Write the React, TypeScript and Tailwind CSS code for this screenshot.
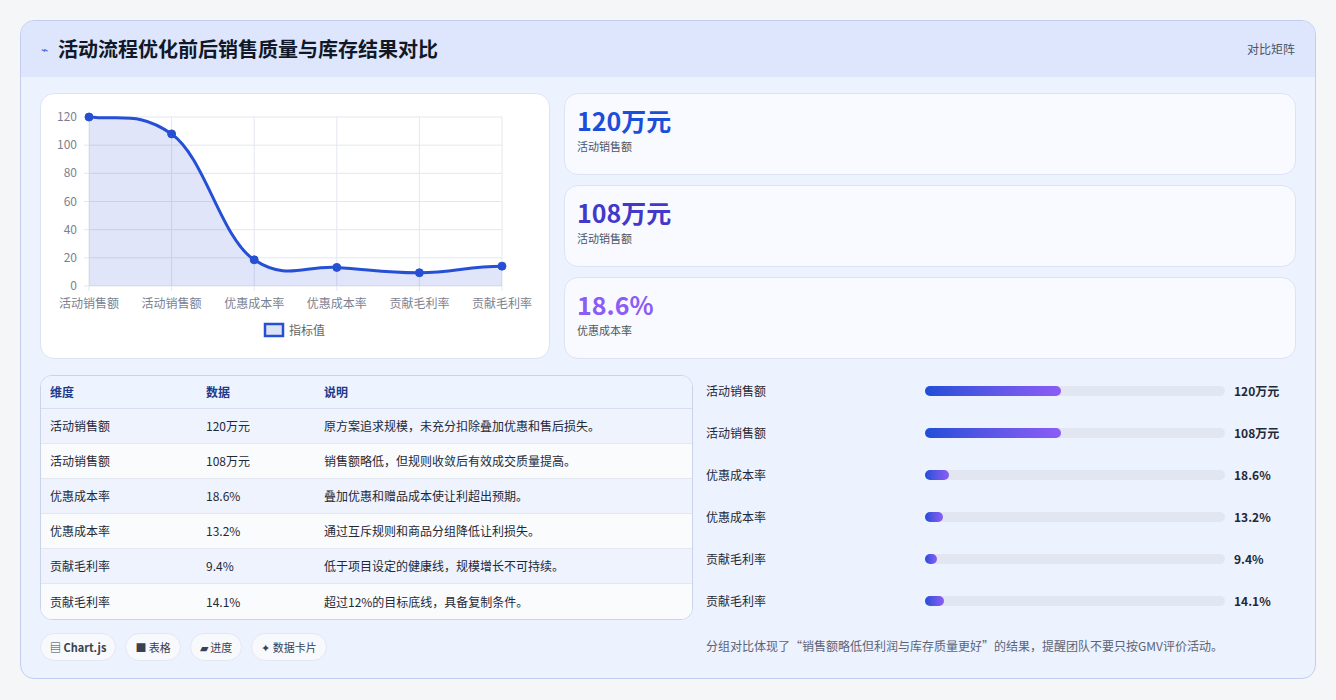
import React from "react";

const rows = [
  ["活动销售额", "120万元", "原方案追求规模，未充分扣除叠加优惠和售后损失。"],
  ["活动销售额", "108万元", "销售额略低，但规则收敛后有效成交质量提高。"],
  ["优惠成本率", "18.6%", "叠加优惠和赠品成本使让利超出预期。"],
  ["优惠成本率", "13.2%", "通过互斥规则和商品分组降低让利损失。"],
  ["贡献毛利率", "9.4%", "低于项目设定的健康线，规模增长不可持续。"],
  ["贡献毛利率", "14.1%", "超过12%的目标底线，具备复制条件。"],
];
const bars = [
  ["活动销售额", "120万元", 136],
  ["活动销售额", "108万元", 136],
  ["优惠成本率", "18.6%", 24],
  ["优惠成本率", "13.2%", 18],
  ["贡献毛利率", "9.4%", 12],
  ["贡献毛利率", "14.1%", 19],
] as const;

function Chart() {
  const vals = [120, 108, 18.6, 13.2, 9.4, 14.1];
  const x0 = 48, x1 = 461, y0 = 23, y1 = 192;
  const xs = vals.map((_, i) => x0 + ((x1 - x0) * i) / 5);
  const ys = vals.map((v) => y1 - ((y1 - y0) * v) / 120);
  let d = `M${xs[0]},${ys[0]}`;
  for (let i = 0; i < 5; i++) {
    const dx = (xs[i + 1] - xs[i]) * 0.4;
    const s0 = i === 0 ? (ys[1] - ys[0]) * 0.5 : (ys[i + 1] - ys[i - 1]) / 2 * 0.8;
    const s1 = i === 4 ? 0 : (ys[i + 2] - ys[i]) / 2 * 0.8;
    d += ` C${xs[i] + dx},${ys[i] + s0 * 0.4} ${xs[i + 1] - dx},${ys[i + 1] - s1 * 0.4} ${xs[i + 1]},${ys[i + 1]}`;
  }
  const labels = ["活动销售额", "活动销售额", "优惠成本率", "优惠成本率", "贡献毛利率", "贡献毛利率"];
  return (
    <svg width="508" height="264" style={{ fontFamily: "'Noto Sans CJK SC', sans-serif" }}>
      {[0, 20, 40, 60, 80, 100, 120].map((t) => {
        const y = y1 - ((y1 - y0) * t) / 120;
        return (
          <g key={t}>
            <line x1={x0 - 5} x2={x1} y1={y} y2={y} stroke="#e3e7ef" />
            <text x={x0 - 12} y={y + 4} textAnchor="end" fontSize="12" fill="#7b8190">{t}</text>
          </g>
        );
      })}
      {xs.map((x, i) => (
        <g key={i}>
          <line x1={x} x2={x} y1={y0} y2={y1 + 5} stroke="#e3e7ef" />
          <text x={x} y={y1 + 22} textAnchor="middle" fontSize="12" fill="#7b8190">{labels[i]}</text>
        </g>
      ))}
      <path d={`${d} L${x1},${y1} L${x0},${y1} Z`} fill="rgba(37,72,214,0.14)" />
      <path d={d} fill="none" stroke="#2550d6" strokeWidth="3" />
      {xs.map((x, i) => (
        <circle key={i} cx={x} cy={ys[i]} r="4" fill="#2550d6" stroke="#2a4fd0" />
      ))}
      <rect x="224" y="230" width="18" height="12" fill="#dde3f7" stroke="#2550d6" strokeWidth="2.5" />
      <text x="248" y="241" fontSize="12" fill="#666">指标值</text>
    </svg>
  );
}

export default function App() {
  return (
    <div className="min-h-[700px] bg-[#f5f6f8] pt-[20px] px-[20px]" style={{ fontFamily: "'Noto Sans CJK SC', 'Noto Sans', sans-serif" }}>
      <div className="w-[1296px] h-[659px] rounded-[14px] border border-[#c3cdef] bg-[#edf2ff] overflow-hidden">
        <div className="h-[56px] bg-[#dde6fd] flex items-center justify-between px-[20px]">
          <div className="flex items-center gap-[10px]">
            <span className="text-[#3b66e0] text-[12px]">⌁</span>
            <span className="text-[20px] font-bold text-[#111827]">活动流程优化前后销售质量与库存结果对比</span>
          </div>
          <span className="text-[12px] text-[#4b5563]">对比矩阵</span>
        </div>
        <div className="px-[19px] pt-[16px]">
          <div className="flex gap-[14px]">
            <div className="w-[510px] h-[266px] bg-white rounded-[14px] border border-[#dde3f5] overflow-hidden">
              <Chart />
            </div>
            <div className="flex-1 flex flex-col gap-[10px]">
              {[
                ["120万元", "text-[#1d4ed8]"],
                ["108万元", "text-[#4338ca]"],
                ["18.6%", "text-[#8b5cf6]"],
              ].map(([v, c], i) => (
                <div key={i} className="h-[82px] rounded-[14px] border border-[#dde3f5] bg-[#f8faff] px-[12px] pt-[10px]">
                  <div className={`text-[25px] font-bold leading-[32px] ${c}`}>{v}</div>
                  <div className="text-[11px] text-[#4b5563] mt-[2px]">{i === 2 ? "优惠成本率" : "活动销售额"}</div>
                </div>
              ))}
            </div>
          </div>
          <div className="flex gap-[13px] mt-[16px]">
            <div className="w-[653px]">
              <div className="rounded-[12px] border border-[#c9d3ea] overflow-hidden bg-white">
                <div className="h-[33px] flex items-center text-[12px] font-bold text-[#1e3a8a] bg-[#eef4ff] border-b border-[#d6def0]">
                  <div className="w-[165px] pl-[9px]">维度</div>
                  <div className="w-[118px]">数据</div>
                  <div>说明</div>
                </div>
                {rows.map((r, i) => (
                  <div key={i} className={`h-[35px] flex items-center text-[12px] text-[#1f2937] ${i % 2 === 0 ? "bg-[#eef3fd]" : "bg-[#f9fbfd]"} ${i < 5 ? "border-b border-[#e2e7f0]" : ""}`}>
                    <div className="w-[165px] pl-[9px]">{r[0]}</div>
                    <div className="w-[118px]">{r[1]}</div>
                    <div>{r[2]}</div>
                  </div>
                ))}
              </div>
              <div className="flex gap-[9px] mt-[13px]">
                {["▤ Chart.js", "■ 表格", "▰ 进度", "✦ 数据卡片"].map((t, i) => (
                  <span key={i} className={`h-[28px] px-[9px] flex items-center rounded-full border border-[#e2e7f0] bg-[#f7f9fd] text-[11px] text-[#374151] ${i === 0 ? "font-bold" : ""}`}>{t}</span>
                ))}
              </div>
            </div>
            <div className="flex-1 -mt-[5px]">
              {bars.map((b, i) => (
                <div key={i} className="h-[42px] flex items-center">
                  <div className="w-[219px] text-[12px] text-[#1f2937]">{b[0]}</div>
                  <div className="w-[300px] h-[10px] rounded-full bg-[#e2e6f0]">
                    <div className="h-[10px] rounded-full bg-gradient-to-r from-[#1d4ed8] to-[#8b5cf6]" style={{ width: b[2] }} />
                  </div>
                  <div className="ml-[9px] text-[12px] font-bold text-[#1f2937]">{b[1]}</div>
                </div>
              ))}
              <div className="mt-[15px] text-[12px] text-[#5b6474]">分组对比体现了“销售额略低但利润与库存质量更好”的结果，提醒团队不要只按GMV评价活动。</div>
            </div>
          </div>
        </div>
      </div>
    </div>
  );
}
